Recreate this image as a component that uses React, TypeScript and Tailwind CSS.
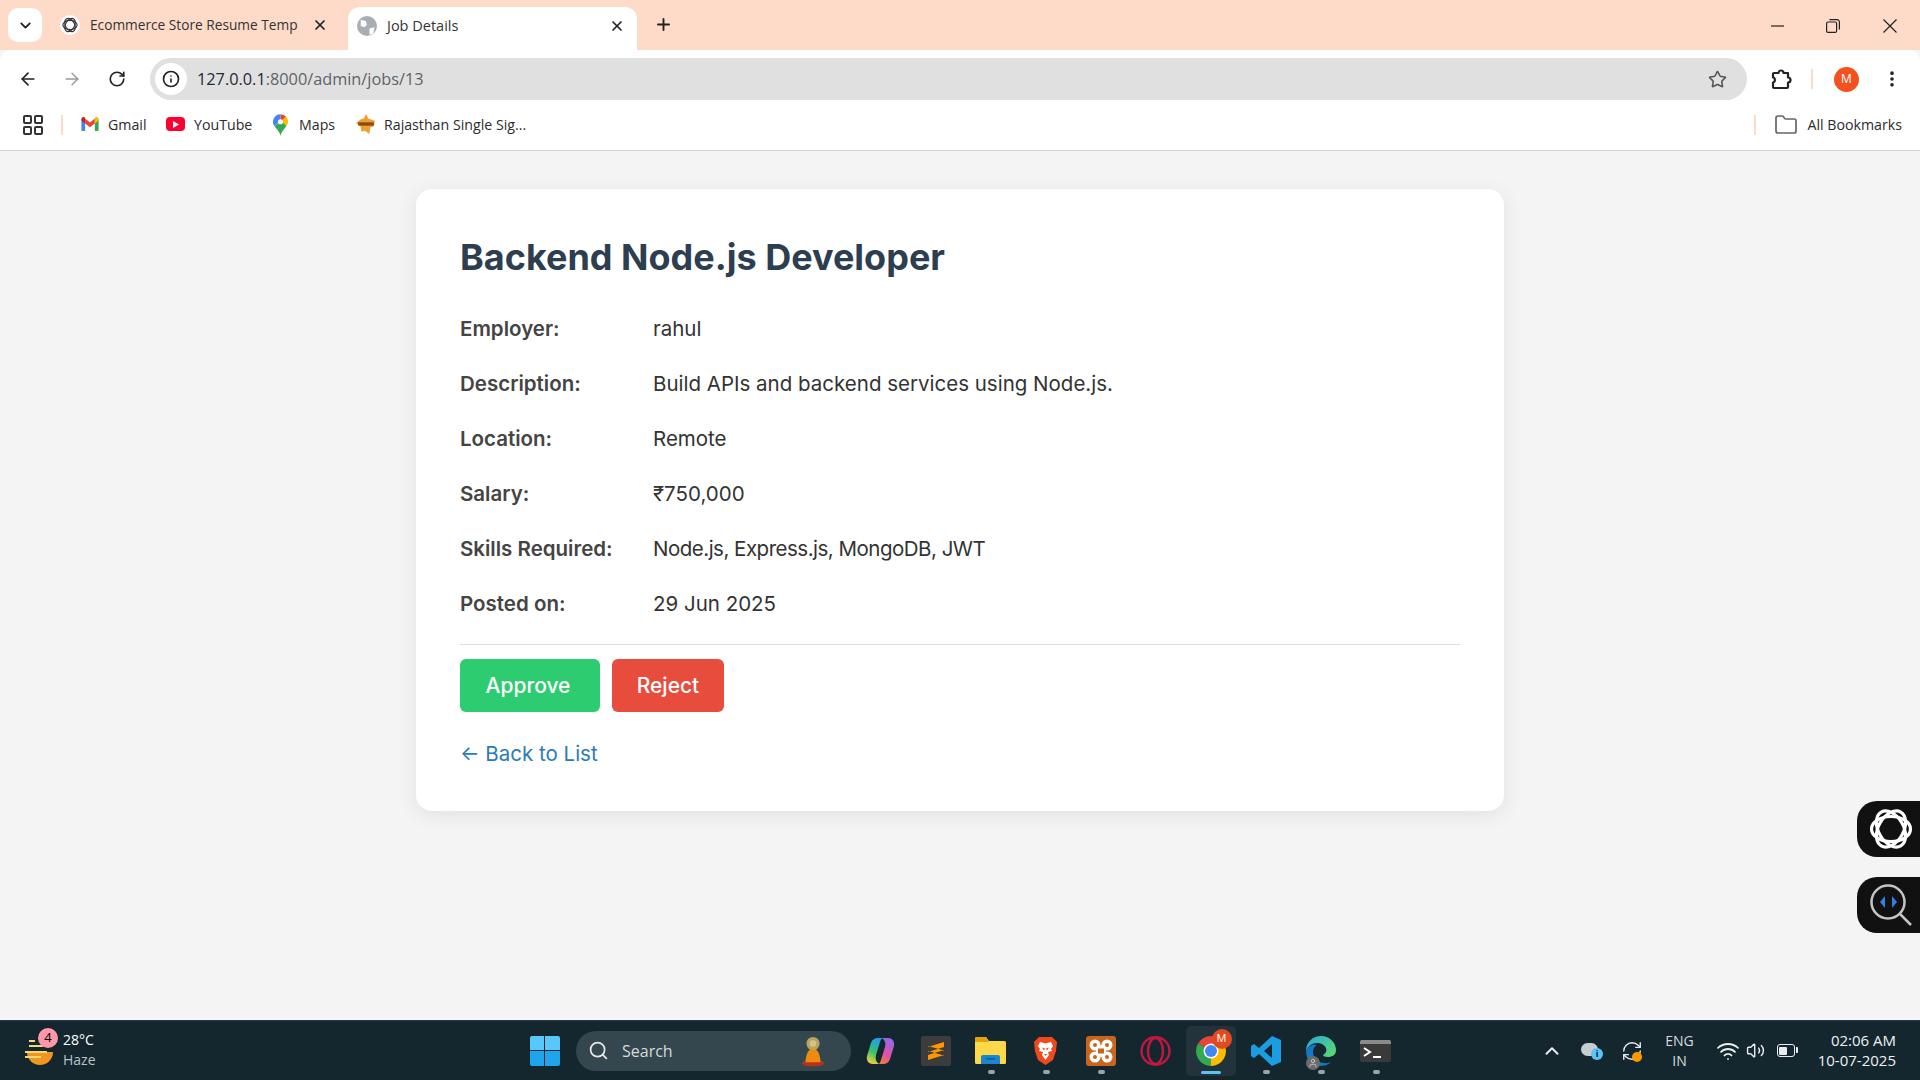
import { ArrowLeft, ArrowRight, ChevronDown, ChevronUp, Folder, Info, LayoutGrid, MoreVertical, Plus, RefreshCw, RotateCw, Search, Star, User, Volume2, Wifi, X } from 'lucide-react';

const details = [
  { label: 'Employer:', value: 'rahul', tight: false },
  { label: 'Description:', value: 'Build APIs and backend services using Node.js.', tight: false },
  { label: 'Location:', value: 'Remote', tight: false },
  { label: 'Salary:', value: '₹750,000', tight: false },
  { label: 'Skills Required:', value: 'Node.js, Express.js, MongoDB, JWT', tight: true },
  { label: 'Posted on:', value: '29 Jun 2025', tight: false },
];

function OpenAiKnot({ size, className }: { size: number; className?: string }) {
  return (
    <svg width={size} height={size} viewBox="0 0 44 44" fill="none" stroke="currentColor" strokeWidth="3.2" className={className}>
      <ellipse cx="22" cy="22" rx="19.500" ry="12.500" />
      <ellipse cx="22" cy="22" rx="19.500" ry="12.500" transform="rotate(60 22 22)" />
      <ellipse cx="22" cy="22" rx="19.500" ry="12.500" transform="rotate(120 22 22)" />
    </svg>
  );
}

function GmailIcon() {
  return (
    <svg width="18" height="14" viewBox="0 0 16 13">
      <path d="M0 2v10a1 1 0 0 0 1 1h2.5V5.500z" fill="#4285f4" />
      <path d="M16 2v10a1 1 0 0 1-1 1h-2.500V5.500z" fill="#34a853" />
      <path d="M3.500 6V1.500L8 5l4.500-3.500V6L8 9.500z" fill="#ea4335" />
      <path d="M0 2c0-1.600 1.800-2.500 3-1.600l.5.400V6L0 3.300z" fill="#c5221f" />
      <path d="M16 2c0-1.600-1.800-2.500-3-1.600l-.5.400V6L16 3.300z" fill="#fbbc04" />
    </svg>
  );
}

function YoutubeIcon() {
  return (
    <div className="w-[19px] h-[14px] bg-[#ff0033] rounded-[4px] flex items-center justify-center">
      <svg width="6" height="7" viewBox="0 0 7 8"><path d="M0 0l7 4-7 4z" fill="#fff" /></svg>
    </div>
  );
}

function MapsIcon() {
  return (
    <svg width="15" height="22" viewBox="0 0 14 20">
      <path d="M7 0a7 7 0 0 0-5.400 11.400L7 5z" fill="#4285f4" />
      <path d="M7 0a7 7 0 0 1 5.300 2.400L7 7z" fill="#ea4335" />
      <path d="M12.300 2.400A7 7 0 0 1 12.500 11L7 7z" fill="#fbbc04" />
      <path d="M1.600 11.400L7 5.500l5.500 5.500C10.500 14 8 16 7 20c-1-4-3.500-6-5.400-8.600z" fill="#34a853" />
      <circle cx="7" cy="7" r="2.400" fill="#fff" />
    </svg>
  );
}

function RajasthanIcon() {
  return (
    <svg width="20" height="20" viewBox="0 0 18 18">
      <path d="M9 0l2 4 6 2-1 5-3 1-1 6-4-3-3 1-1-5-4-3 4-3 3-1z" fill="#f0a030" />
      <rect x="2" y="7.500" width="14" height="3" fill="#8a4a10" />
    </svg>
  );
}

function ExtensionIcon() {
  return (
    <svg width="22" height="22" viewBox="0 0 22 22" fill="none" stroke="#222" strokeWidth="2.200" strokeLinejoin="round">
      <path d="M4 5h4.500a2.500 2.500 0 0 1 5 0H18v4.500a2.500 2.500 0 0 1 0 5V19a1 1 0 0 1-1 1H4a1 1 0 0 1-1-1v-4.500c2.500 0 2.500-5 0-5V6a1 1 0 0 1 1-1z" />
    </svg>
  );
}

function Bookmark({ icon, label, width }: { icon: React.ReactNode; label: string; width: string }) {
  return (
    <div className={`flex items-center gap-[8px] ${width}`}>
      <div className="w-[21px] flex justify-center shrink-0">{icon}</div>
      <span className="text-[14.200px] text-[#2b2b2b] whitespace-nowrap">{label}</span>
    </div>
  );
}

function BrowserChrome() {
  return (
    <div className="font-['Open_Sans',sans-serif] shrink-0">
      <div className="h-[50px] bg-[#fddbc8] flex items-end">
        <div className="w-[34px] h-[34px] ml-[8px] mb-[8px] bg-white rounded-[10px] flex items-center justify-center shrink-0">
          <ChevronDown size={17} strokeWidth={2.6} className="text-[#222]" />
        </div>
        <div className="w-[306px] h-[50px] flex items-center pl-[18px] shrink-0">
          <div className="w-[20px] h-[20px] bg-white rounded-full flex items-center justify-center text-[#333] shrink-0">
            <OpenAiKnot size={16} />
          </div>
          <span className="ml-[10px] w-[209px] text-[13.700px] text-[#333] whitespace-nowrap">Ecommerce Store Resume Temp</span>
          <X size={16} strokeWidth={2.6} className="ml-[13px] text-[#222]" />
        </div>
        <div className="w-[289px] h-[43px] bg-white rounded-t-[12px] flex items-center pl-[9px] pb-[6px] shrink-0">
          <svg width="20" height="20" viewBox="0 0 16 16">
            <circle cx="8" cy="8" r="8" fill="#a9aeb4" />
            <path d="M3 3l4 1 1 3-2 2-3-1zM10 10l4-1-1 5-3 1z" fill="#fff" />
          </svg>
          <span className="ml-[10px] w-[222px] text-[14.500px] text-[#333]">Job Details</span>
          <X size={16} strokeWidth={2.6} className="text-[#222]" />
        </div>
        <Plus size={19} strokeWidth={2.4} className="ml-[17px] mb-[16px] text-[#222]" />
        <div className="ml-auto mr-[1px] flex items-center h-[48px] text-[#222]">
          <div className="w-[56px] flex justify-center">
            <svg width="13" height="2" viewBox="0 0 13 2"><path d="M0 1h13" stroke="#222" strokeWidth="1.200" /></svg>
          </div>
          <div className="w-[56px] flex justify-center">
            <svg width="14" height="14" viewBox="0 0 14 14" fill="none" stroke="#222" strokeWidth="1.200">
              <rect x="0.600" y="3" width="10" height="10.400" rx="1.500" />
              <path d="M3.500 0.700h7.500a2.400 2.400 0 0 1 2.400 2.400v7.500" />
            </svg>
          </div>
          <div className="w-[58px] flex justify-center">
            <svg width="14" height="14" viewBox="0 0 14 14" fill="none" stroke="#222" strokeWidth="1.200"><path d="M0.500 0.500l13 13M13.500 0.500l-13 13" /></svg>
          </div>
        </div>
      </div>

      <div className="h-[58px] bg-white rounded-t-[10px] flex items-center">
        <ArrowLeft size={20} strokeWidth={2} className="ml-[18px] text-[#222]" />
        <ArrowRight size={20} strokeWidth={1.7} className="ml-[24px] text-[#999]" />
        <RotateCw size={18} strokeWidth={2.2} className="ml-[26px] text-[#222]" />
        <div className="ml-[24px] w-[1597px] h-[42px] bg-[#e0e0e0] rounded-full flex items-center pl-[5px] shrink-0">
          <div className="w-[32px] h-[32px] rounded-full bg-white flex items-center justify-center">
            <Info size={18} strokeWidth={2.2} className="text-[#222]" />
          </div>
          <span className="ml-[10px] text-[16.300px] text-[#1f2937]">127.0.0.1<span className="text-[#5f6368]">:8000/admin/jobs/13</span></span>
          <Star size={19} strokeWidth={2} className="ml-auto mr-[20px] text-[#555]" />
        </div>
        <div className="ml-[23px] shrink-0"><ExtensionIcon /></div>
        <div className="ml-[19px] w-[2px] h-[20px] bg-[#fddbc8] shrink-0" />
        <div className="ml-[21px] w-[25px] h-[25px] rounded-full bg-[#f4511e] text-white text-[12px] flex items-center justify-center shrink-0">M</div>
        <MoreVertical size={20} strokeWidth={2.4} className="ml-[23px] text-[#222] shrink-0" />
      </div>

      <div className="h-[43px] bg-white border-b border-[#d4d4d4] flex items-center pb-[9px]">
        <LayoutGrid size={24} strokeWidth={2} className="ml-[21px] text-[#333]" />
        <div className="ml-[16px] w-[2px] h-[20px] bg-[#fddbc8]" />
        <div className="ml-[16px] flex items-center">
          <Bookmark icon={<GmailIcon />} label="Gmail" width="w-[86px]" />
          <Bookmark icon={<YoutubeIcon />} label="YouTube" width="w-[105px]" />
          <Bookmark icon={<MapsIcon />} label="Maps" width="w-[85px]" />
          <Bookmark icon={<RajasthanIcon />} label="Rajasthan Single Sig..." width="w-[180px]" />
        </div>
        <div className="ml-auto w-[2px] h-[20px] bg-[#fddbc8]" />
        <Folder size={24} strokeWidth={1.7} className="ml-[18px] text-[#666]" />
        <span className="ml-[9px] mr-[18px] text-[14.200px] text-[#2b2b2b]">All Bookmarks</span>
      </div>
    </div>
  );
}

function JobCard() {
  return (
    <div className="w-[1088px] mx-auto mt-[38px] h-[622px] bg-white rounded-[16px] shadow-[0_4px_20px_rgba(0,0,0,0.08)] px-[44px] pt-[45px] font-['Inter',sans-serif]">
      <h1 className="text-[36px] leading-[46px] font-bold text-[#2c3e50]">Backend Node.js Developer</h1>
      <div className="mt-[22px]">
        {details.map(item => (
          <div key={item.label} className="flex h-[55px] items-center text-[20.500px]">
            <span className="w-[193px] font-semibold text-[#444]">{item.label}</span>
            <span className={item.tight ? 'text-[#333] tracking-[-0.5px]' : 'text-[#333]'}>{item.value}</span>
          </div>
        ))}
      </div>
      <div className="mt-[12px] border-t border-[#ddd] pt-[14px] flex gap-[12px]">
        <button className="w-[140px] h-[53px] rounded-[6px] bg-[#2ecc71] text-white text-[21px] font-medium pr-[4px]">Approve</button>
        <button className="w-[112px] h-[53px] rounded-[6px] bg-[#e74c3c] text-white text-[21px] font-medium">Reject</button>
      </div>
      <a className="block mt-[28px] text-[20.500px] leading-[28px] text-[#2b7bba]">← Back to List</a>
    </div>
  );
}

function TaskIcon({ children, dot, active }: { children: React.ReactNode; dot?: boolean; active?: boolean }) {
  return (
    <div className="w-[55px] flex justify-center">
      <div className={`relative w-[50px] h-[50px] flex items-center justify-center rounded-[5px] ${active ? 'bg-[#22333b]' : ''}`}>
        {children}
        {dot && <div className="absolute bottom-[2px] left-[22px] w-[7px] h-[4px] rounded-full bg-[#9aa5a8]" />}
        {active && <div className="absolute bottom-[2px] left-[15px] w-[20px] h-[3px] rounded-full bg-[#5cc4f5]" />}
      </div>
    </div>
  );
}

function CopilotIcon() {
  return (
    <svg width="29" height="28" viewBox="0 0 29 28">
      <defs>
        <linearGradient id="copilotLeft" x1="0.600" y1="0" x2="0.300" y2="1">
          <stop offset="0" stopColor="#1f9cf0" />
          <stop offset="0.550" stopColor="#37c26b" />
          <stop offset="1" stopColor="#f5d13c" />
        </linearGradient>
        <linearGradient id="copilotRight" x1="0.700" y1="0" x2="0.300" y2="1">
          <stop offset="0" stopColor="#8c6cf0" />
          <stop offset="0.600" stopColor="#e24fa8" />
          <stop offset="1" stopColor="#f47a3c" />
        </linearGradient>
      </defs>
      <path d="M13 1C8 1 6 3 5 6L1 19c-1 5 2 8 6 8h6c-3-2-4-5-3-9l4-13c1-3 2-4 3-4z" fill="url(#copilotLeft)" />
      <path d="M16 27c5 0 7-2 8-5l4-13c1-5-2-8-6-8h-6c3 2 4 5 3 9l-4 13c-1 3-2 4-3 4z" fill="url(#copilotRight)" />
    </svg>
  );
}

function SublimeIcon() {
  return (
    <svg width="30" height="30" viewBox="0 0 30 30">
      <rect width="30" height="30" rx="2" fill="#3c3c3c" />
      <path d="M7 11L23 6v5L7 16zM7 15l16 4.500v-5L7 10zM7 19l16-5v5L7 24z" fill="#ff9800" />
    </svg>
  );
}

function FolderAppIcon() {
  return (
    <svg width="31" height="27" viewBox="0 0 31 27">
      <path d="M0 1.500A1.500 1.500 0 0 1 1.500 0H11l3 4h15.500A1.500 1.500 0 0 1 31 5.500v20a1.500 1.500 0 0 1-1.500 1.500h-28A1.500 1.500 0 0 1 0 25.500z" fill="#fdd94a" />
      <path d="M0 1.500A1.500 1.500 0 0 1 1.500 0H11l3 5H0z" fill="#e0a50e" />
      <path d="M6 20a2 2 0 0 1 2-2h15a2 2 0 0 1 2 2v7H6z" fill="#1c85cf" />
      <rect x="11" y="21" width="9" height="1.500" fill="#0d5d99" />
    </svg>
  );
}

function BraveIcon() {
  return (
    <svg width="25" height="28" viewBox="0 0 25 28">
      <path d="M6 0h13l5 5-1 9-3 9-7.500 5L5 23 2 14 1 5z" fill="#f1491b" />
      <path d="M7 5l5.500 1.500L18 5l2 4-2 3 1 2-4 1 1 3-3.500 5L9 18l1-3-4-1 1-2-2-3z" fill="#fff" />
      <path d="M9 10.500l3 1 -1 2zM16 10.500l-3 1 1 2zM11 17h3l-1.500 2z" fill="#f1491b" />
    </svg>
  );
}

function XamppIcon() {
  return (
    <svg width="30" height="30" viewBox="0 0 30 30">
      <rect width="30" height="30" rx="3" fill="#c9651f" />
      <g fill="#fff">
        <circle cx="9" cy="9" r="5.500" />
        <circle cx="21" cy="9" r="5.500" />
        <circle cx="9" cy="21" r="5.500" />
        <circle cx="21" cy="21" r="5.500" />
        <rect x="10" y="9" width="10" height="12" />
      </g>
      <g fill="#c9651f">
        <circle cx="9" cy="9" r="2" />
        <circle cx="21" cy="9" r="2" />
        <circle cx="9" cy="21" r="2" />
        <circle cx="21" cy="21" r="2" />
        <rect x="12" y="12.500" width="6" height="5" />
      </g>
    </svg>
  );
}

function OperaIcon() {
  return (
    <svg width="31" height="30" viewBox="0 0 31 30" fill="none" stroke="#c2183f" strokeWidth="2.400">
      <ellipse cx="15.500" cy="15" rx="14" ry="13.800" />
      <ellipse cx="15.500" cy="15" rx="7.500" ry="13" />
    </svg>
  );
}

function ChromeIcon() {
  return (
    <svg width="30" height="30" viewBox="0 0 30 30">
      <path d="M15 15L2.010 7.500A15 15 0 0 1 27.990 7.500z" fill="#ea4335" />
      <path d="M15 15L27.990 7.500A15 15 0 0 1 15 30z" fill="#fbbc04" />
      <path d="M15 15L15 30A15 15 0 0 1 2.010 7.500z" fill="#34a853" />
      <circle cx="15" cy="15" r="7.500" fill="#fff" />
      <circle cx="15" cy="15" r="6" fill="#4285f4" />
    </svg>
  );
}

function VsCodeIcon() {
  return (
    <svg width="30" height="30" viewBox="0 0 30 30">
      <path fillRule="evenodd" d="M21 0l9 4v22l-9 4L8 18l-5 4-3-2V10l3-2 5 4zM21 8l-8 7 8 7z" fill="#1b9de2" />
    </svg>
  );
}

function EdgeIcon() {
  return (
    <div className="relative">
      <svg width="30" height="30" viewBox="0 0 30 30">
        <defs>
          <linearGradient id="edgeTop" x1="0" y1="0" x2="1" y2="0.600">
            <stop offset="0" stopColor="#2aa5e0" />
            <stop offset="1" stopColor="#53d67a" />
          </linearGradient>
        </defs>
        <path d="M0 15C0 6 7 0 15 0c9 0 15 7 15 14 0 5-4 7-8 7-3 0-5-1-5-2 3-2 4-4 3-7-2-4-6-5-9-5C6 7 2 10 0 15z" fill="url(#edgeTop)" />
        <path d="M0 15c2-5 7-7 11-6-4 2-5 7-3 11 2 6 10 9 17 6-3 3-7 4-11 4C6 30 0 24 0 15z" fill="#1278c8" />
      </svg>
      <div className="absolute left-0 bottom-[-4px] w-[14px] h-[14px] rounded-full bg-[#6b6b6b] flex items-center justify-center">
        <User size={10} strokeWidth={2} className="text-[#d0d0d0]" />
      </div>
    </div>
  );
}

function TerminalIcon() {
  return (
    <svg width="31" height="22" viewBox="0 0 31 22">
      <rect width="31" height="22" rx="2" fill="#3a3a3a" />
      <path d="M2 0h27a2 2 0 0 1 2 2v2H0V2a2 2 0 0 1 2-2z" fill="#8a8a8a" />
      <path d="M4 8l6 4-6 4" fill="none" stroke="#fff" strokeWidth="2" />
      <path d="M13 17h8" stroke="#fff" strokeWidth="2" />
    </svg>
  );
}

function Taskbar() {
  return (
    <div className="h-[60px] bg-[#14272f] border-t border-[#2a3a42] shrink-0 flex items-center font-['Open_Sans',sans-serif] text-white">
      <div className="w-[522px] shrink-0 flex items-center pl-[24px] relative">
        <svg width="30" height="30" viewBox="0 0 30 30">
          <path d="M3 16h26a13 13 0 0 1-26 0z" fill="#f0951f" />
          <rect x="5" y="4" width="6" height="2" fill="#f5d67a" />
          <rect x="5" y="9" width="14" height="2" fill="#f5d67a" />
          <rect x="1" y="15" width="22" height="2" fill="#f5d67a" />
          <rect x="1" y="20" width="16" height="2" fill="#f5d67a" />
        </svg>
        <div className="absolute left-[38px] -top-[3px] w-[20px] h-[20px] rounded-full bg-[#ff97a8] text-black text-[13px] flex items-center justify-center">4</div>
        <div className="ml-[9px] leading-[20px] -mt-[1px]">
          <div className="text-[14px]">28°C</div>
          <div className="text-[14px] text-[#b9c3c6]">Haze</div>
        </div>
      </div>
      <div className="w-[45px] flex justify-center shrink-0">
        <div className="grid grid-cols-2 gap-[1.500px] w-[30px] h-[30px]">
          <div className="bg-[#57c8f9] rounded-tl-[2px]" />
          <div className="bg-[#57c8f9] rounded-tr-[2px]" />
          <div className="bg-[#1ea5ee] rounded-bl-[2px]" />
          <div className="bg-[#1ea5ee] rounded-br-[2px]" />
        </div>
      </div>
      <div className="ml-[9px] w-[275px] h-[40px] rounded-full bg-[#35474e] flex items-center pl-[12px] pr-[23px] shrink-0">
        <Search size={21} strokeWidth={2} className="text-[#e6e6e6]" />
        <span className="ml-[13px] text-[16px] text-[#d5d9da]">Search</span>
        <svg width="30" height="32" viewBox="0 0 26 34" className="ml-auto">
          <ellipse cx="13" cy="30" rx="12" ry="3.500" fill="#b5321c" />
          <path d="M5 29c0-7 3-15 8-15s8 8 8 15z" fill="#ee8a12" />
          <circle cx="13" cy="9" r="7" fill="#b7a45e" />
          <circle cx="13" cy="9" r="3.500" fill="#d8c28a" />
        </svg>
      </div>
      <div className="ml-[2px] flex items-center">
        <TaskIcon><CopilotIcon /></TaskIcon>
        <TaskIcon><SublimeIcon /></TaskIcon>
        <TaskIcon dot><FolderAppIcon /></TaskIcon>
        <TaskIcon dot><BraveIcon /></TaskIcon>
        <TaskIcon dot><XamppIcon /></TaskIcon>
        <TaskIcon><OperaIcon /></TaskIcon>
        <TaskIcon active>
          <ChromeIcon />
          <div className="absolute top-[3px] left-[26px] w-[20px] h-[20px] rounded-full bg-[#e2491f] text-[11px] flex items-center justify-center">M</div>
        </TaskIcon>
        <TaskIcon dot><VsCodeIcon /></TaskIcon>
        <TaskIcon dot><EdgeIcon /></TaskIcon>
        <TaskIcon dot><TerminalIcon /></TaskIcon>
      </div>
      <div className="ml-auto flex items-center text-[#e8ecee]">
        <ChevronUp size={22} strokeWidth={2.2} />
        <div className="ml-[18px] relative w-[22px] h-[18px]">
          <div className="absolute left-0 top-[1px] w-[17px] h-[13px] rounded-full bg-[#c7ccce]" />
          <div className="absolute right-0 top-[6px] w-[12px] h-[12px] rounded-full bg-[#5cc4f5] text-[#14272f] text-[9px] leading-[12px] font-bold text-center">i</div>
        </div>
        <div className="ml-[18px] relative">
          <RefreshCw size={22} strokeWidth={1.5} />
          <div className="absolute right-[1px] bottom-[0px] w-[10px] h-[10px] rounded-full bg-[#ff9800]" />
        </div>
        <div className="ml-[22px] text-[14px] leading-[20px] text-center text-[#d5dadc]">
          <div>ENG</div>
          <div>IN</div>
        </div>
        <Wifi size={24} strokeWidth={1.8} className="ml-[22px]" />
        <Volume2 size={19} strokeWidth={1.8} className="ml-[6px]" />
        <div className="ml-[12px] relative w-[18px] h-[13px] border-[1.500px] border-[#e8ecee] rounded-[3px] p-[1.500px]">
          <div className="w-[8px] h-full bg-[#e8ecee] rounded-[1px]" />
          <div className="absolute -right-[4px] top-[2px] w-[2px] h-[6px] bg-[#e8ecee] rounded-r-[1px]" />
        </div>
        <div className="ml-[23px] mr-[24px] text-[15px] leading-[20px] text-right text-[#eef1f2] -mt-[1px]">
          <div>02:06 AM</div>
          <div>10-07-2025</div>
        </div>
      </div>
    </div>
  );
}

export default function App() {
  return (
    <div className="h-screen w-full bg-[#f4f4f4] flex flex-col overflow-hidden relative">
      <BrowserChrome />
      <div className="flex-1 min-h-0">
        <JobCard />
      </div>
      <Taskbar />
      <div className="absolute right-0 top-[801px] w-[63px] h-[56px] bg-[#111] rounded-l-[20px] flex items-center pl-[12px] text-white">
        <OpenAiKnot size={44} />
      </div>
      <div className="absolute right-0 top-[877px] w-[63px] h-[56px] bg-[#111] rounded-l-[20px] flex items-center pl-[12px]">
        <svg width="44" height="44" viewBox="0 0 44 44" fill="none">
          <circle cx="19" cy="19" r="16.500" stroke="#c4c4c4" strokeWidth="2.500" />
          <path d="M31 31l11 11" stroke="#c4c4c4" strokeWidth="2.500" />
          <path d="M16 13l-5 6 5 6z" fill="#2f80ed" />
          <path d="M23 13l5 6-5 6z" fill="#2f80ed" />
        </svg>
      </div>
    </div>
  );
}
